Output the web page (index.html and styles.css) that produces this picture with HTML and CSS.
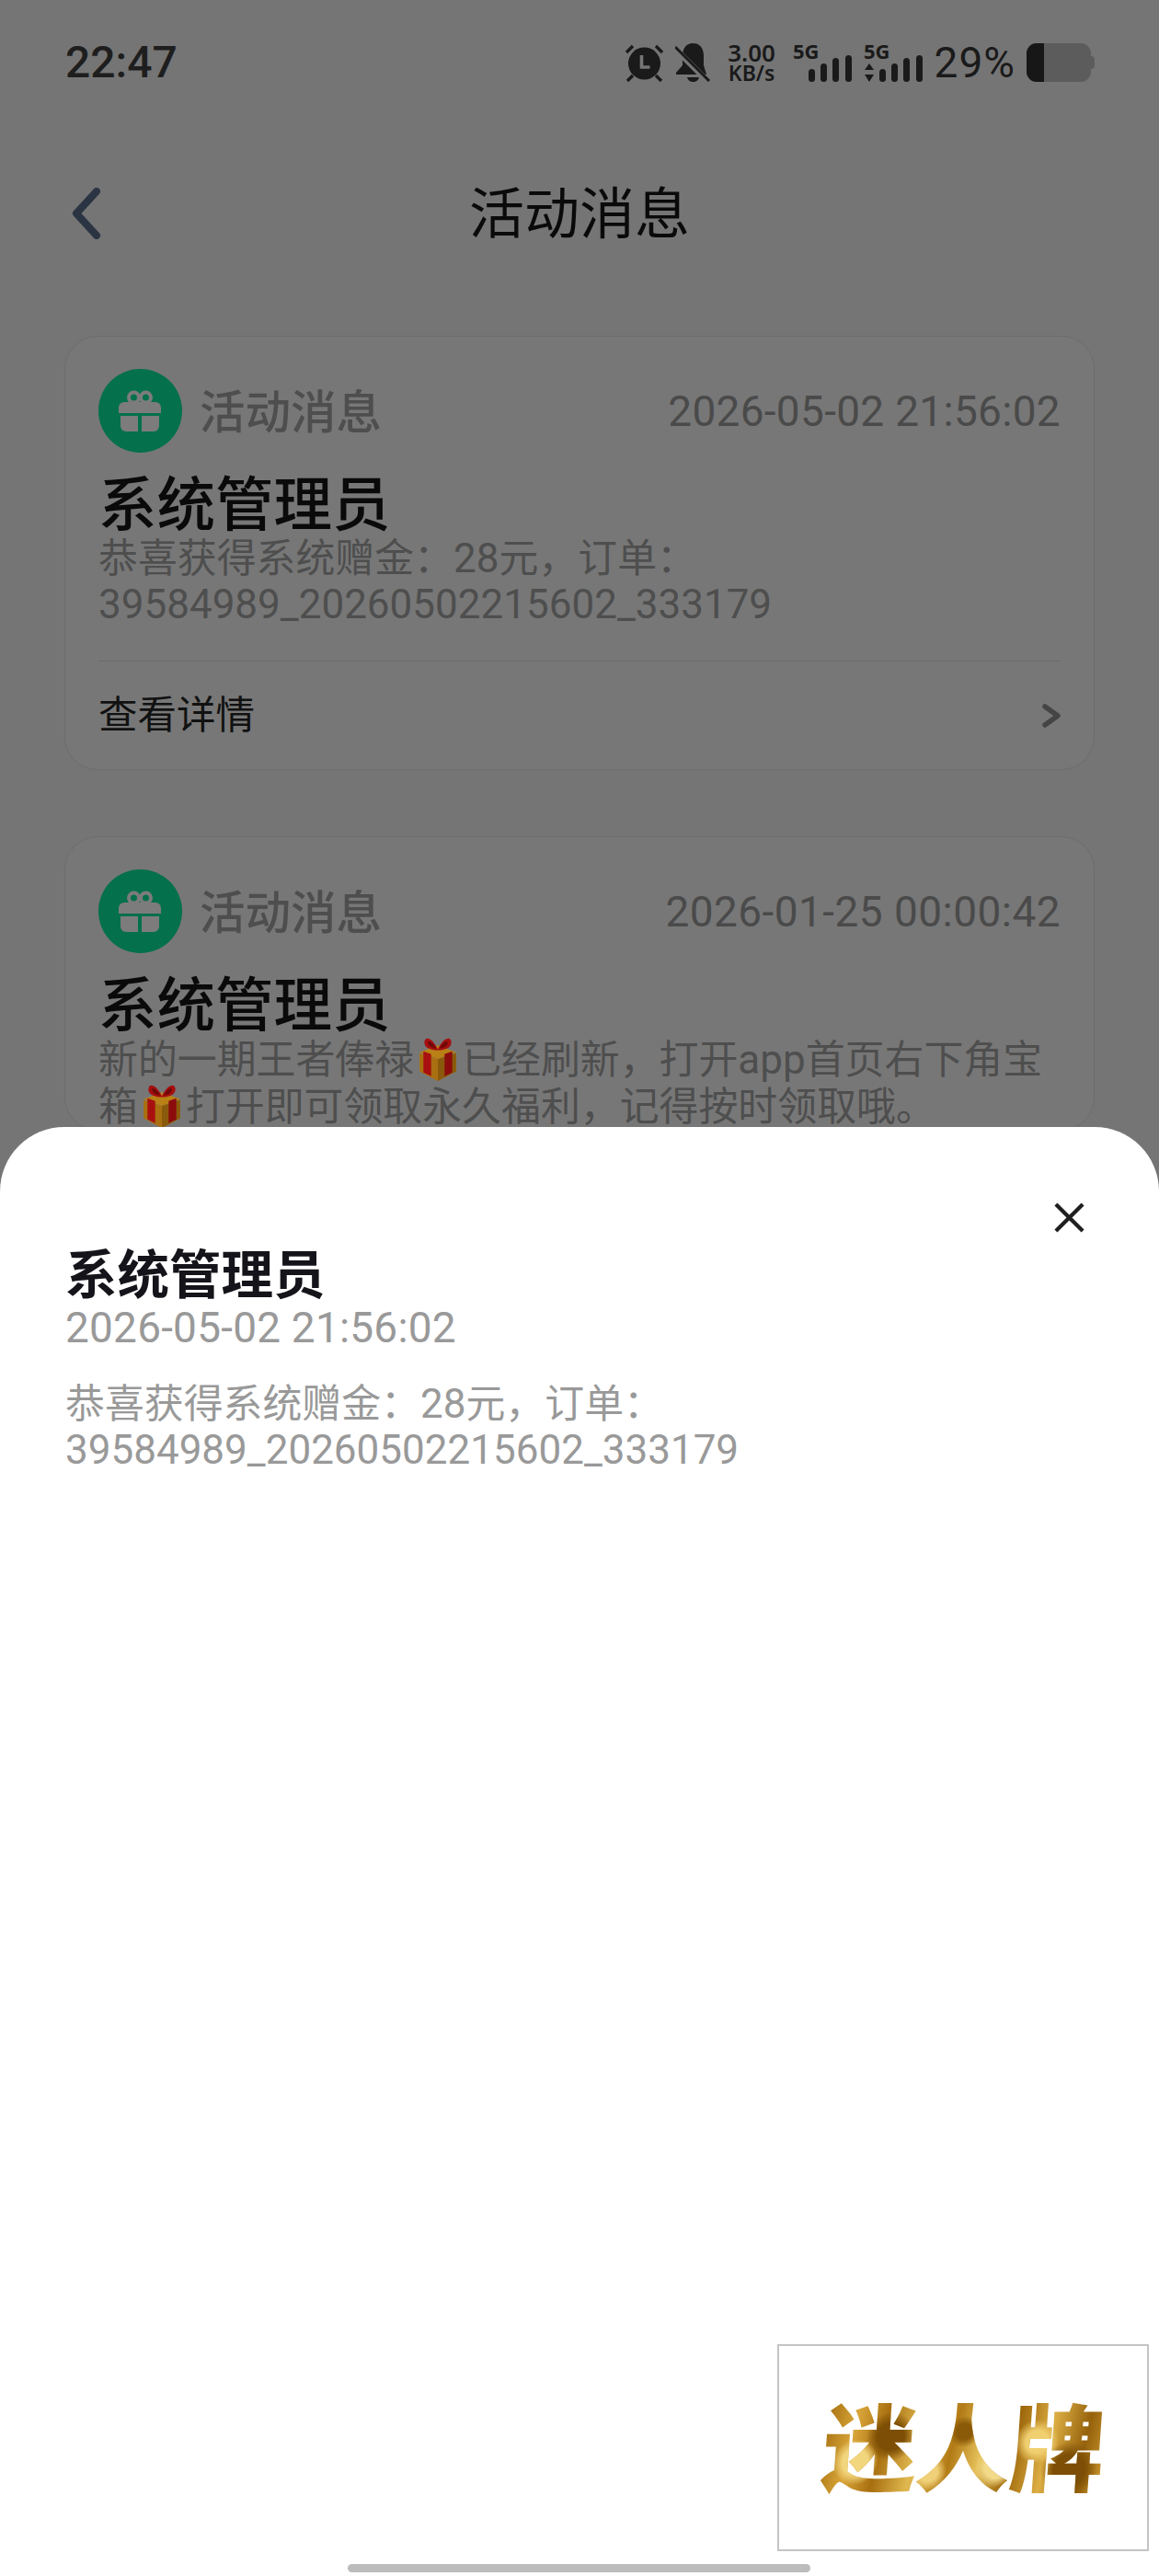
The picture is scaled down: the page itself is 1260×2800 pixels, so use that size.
FILE: index.html
```html
<!DOCTYPE html>
<html lang="zh">
<head>
<meta charset="utf-8">
<title>活动消息</title>
<link rel="stylesheet" href="styles.css">
</head>
<body>
<div class="screen">
  <div class="status">
    <span class="time">22:47</span>
    <div class="status-right">
      <svg class="ic-alarm" viewBox="0 0 43 42"><path d="M2 10 9 3M41 10 34 3" fill="none" stroke="#1a1a1a" stroke-width="3.4"/><circle cx="21.500" cy="22" r="17.500" fill="#1a1a1a"/><path d="M18.500 13v13h9" fill="none" stroke="#757575" stroke-width="3.600"/><path d="M9 35 3 41M34 35 40 41" fill="none" stroke="#1a1a1a" stroke-width="3.400"/></svg>
      <svg class="ic-bell" viewBox="0 0 39 42"><path d="M19.500 0C11 0 8 7 8 14V24L1 32V34H34L31 24V14C31 7 28 0 19.500 0Z" fill="#1a1a1a"/><path d="M13 37H26C25 41 22 42 19.500 42S14 41 13 37Z" fill="#1a1a1a"/><path d="M0 6 36 42" stroke="#757575" stroke-width="6.500"/><path d="M0 4 37 41" stroke="#1a1a1a" stroke-width="3"/></svg>
      <div class="net"><span class="net-a">3.00</span><span class="net-b">KB/s</span></div>
      <svg class="ic-sig" viewBox="0 -6 64 48"><text class="sig-t" x="0" y="17">5G</text><rect x="17" y="28" width="7" height="14" rx="3.500"/><rect x="30" y="22" width="7" height="20" rx="3.500"/><rect x="43" y="16" width="7" height="26" rx="3.500"/><rect x="57" y="13" width="7" height="29" rx="3.500"/></svg>
      <svg class="ic-sig" viewBox="0 -6 64 48"><text class="sig-t" x="0" y="17">5G</text><path d="M6 22 11 29H1ZM6 42 1 34H11Z"/><rect x="17" y="28" width="7" height="14" rx="3.500"/><rect x="30" y="22" width="7" height="20" rx="3.500"/><rect x="43" y="16" width="7" height="26" rx="3.500"/><rect x="57" y="13" width="7" height="29" rx="3.500"/></svg>
      <span class="pct">29%</span>
      <div class="battery"><div class="battery-body"><div class="battery-fill"></div></div><div class="battery-nub"></div></div>
    </div>
  </div>

  <header class="nav">
    <svg class="back" viewBox="0 0 32 56"><path d="M27 4 5 28 27 52" fill="none" stroke="#2a3442" stroke-width="8" stroke-linecap="round" stroke-linejoin="round"/></svg>
    <h1 class="nav-title">活动消息</h1>
  </header>

  <main class="list">
    <article class="card">
      <div class="card-head">
        <svg class="gift-badge" viewBox="0 0 91 91"><circle cx="45.500" cy="45.500" r="45.500" fill="#04704c"/><g fill="#7c7c7c"><path d="M22 48V42a6 6 0 0 1 6-6H62a6 6 0 0 1 6 6v6Z"/><path d="M24 51H43V68H30a6 6 0 0 1-6-6Z"/><path d="M47 51H66V62a6 6 0 0 1-6 6H47Z"/></g><circle cx="38.500" cy="31" r="5.500" fill="none" stroke="#7c7c7c" stroke-width="4"/><circle cx="51.500" cy="31" r="5.500" fill="none" stroke="#7c7c7c" stroke-width="4"/></svg>
        <span class="card-type">活动消息</span>
        <span class="card-date">2026-05-02 21:56:02</span>
      </div>
      <h2 class="card-title">系统管理员</h2>
      <p class="card-body">恭喜获得系统赠金：<span class="num">28</span>元，订单：<span class="num">39584989_20260502215602_333179</span></p>
      <div class="card-foot">
        <span class="foot-label">查看详情</span>
        <svg class="chev" viewBox="0 0 20 26"><path d="M3 3 17 13 3 23" fill="none" stroke="#454545" stroke-width="5.500" stroke-linecap="round" stroke-linejoin="round"/></svg>
      </div>
    </article>

    <article class="card">
      <div class="card-head">
        <svg class="gift-badge" viewBox="0 0 91 91"><circle cx="45.500" cy="45.500" r="45.500" fill="#04704c"/><g fill="#7c7c7c"><path d="M22 48V42a6 6 0 0 1 6-6H62a6 6 0 0 1 6 6v6Z"/><path d="M24 51H43V68H30a6 6 0 0 1-6-6Z"/><path d="M47 51H66V62a6 6 0 0 1-6 6H47Z"/></g><circle cx="38.500" cy="31" r="5.500" fill="none" stroke="#7c7c7c" stroke-width="4"/><circle cx="51.500" cy="31" r="5.500" fill="none" stroke="#7c7c7c" stroke-width="4"/></svg>
        <span class="card-type">活动消息</span>
        <span class="card-date card-date-wide">2026-01-25 00:00:42</span>
      </div>
      <h2 class="card-title">系统管理员</h2>
      <p class="card-body">新的一期王者俸禄<svg class="emoji" viewBox="0 0 44 46"><use href="#present"/></svg>已经刷新，打开<span class="num">app</span>首页右下角宝箱<svg class="emoji" viewBox="0 0 44 46"><use href="#present"/></svg>打开即可领取永久福利，记得按时领取哦。</p>
    </article>
  </main>

  <section class="sheet">
    <svg class="close" viewBox="0 0 34 34"><path d="M2 2 32 32M32 2 2 32" stroke="#1f1f1f" stroke-width="4.400" fill="none"/></svg>
    <h2 class="sheet-title">系统管理员</h2>
    <div class="sheet-date">2026-05-02 21:56:02</div>
    <p class="sheet-body">恭喜获得系统赠金：<span class="num">28</span>元，订单：<span class="num">39584989_20260502215602_333179</span></p>
  </section>

  <div class="watermark"><span class="wm-text">迷人牌</span></div>
  <div class="home-bar"></div>

  <svg class="defs" width="0" height="0">
    <defs>
      <g id="present">
        <path d="M3 17 22 23 41 17V36L22 46 3 36Z" fill="#a96f10"/>
        <path d="M22 23 41 17V36L22 46Z" fill="#8a5a0c"/>
        <path d="M3 16 22 9 41 16 22 23Z" fill="#b98016"/>
        <path d="M7 15 15 18V41L7 37Z" fill="#a81010"/>
        <path d="M37 15 29 18V41L37 37Z" fill="#8c0c0c"/>
        <path d="M22 13C16 0 8 -1 8 6 8 12 16 14 22 14 28 14 36 12 36 6 36 -1 28 0 22 13Z" fill="#a50f0f"/>
        <path d="M12 5C14 4 18 8 20 12 15 11 11 9 12 5ZM32 5C30 4 26 8 24 12 29 11 33 9 32 5Z" fill="#6f0808"/>
      </g>
    </defs>
  </svg>
</div>
</body>
</html>
```
FILE: styles.css
```css
* { box-sizing: border-box; }
html, body { margin: 0; padding: 0; }
body { width: 1260px; height: 2800px; overflow: hidden; font-family: Roboto, "Noto Sans CJK SC", sans-serif; }
h1, h2, p { margin: 0; font-weight: 400; }
.screen { position: relative; width: 1260px; height: 2800px; background: #757575; overflow: hidden; }
.num { font-family: Roboto, sans-serif; font-size: 44px; }

.status { display: flex; align-items: flex-start; justify-content: space-between; height: 89px; padding: 47px 70px 0 71px; color: #1a1a1a; }
.time { font-size: 48px; line-height: 42px; font-weight: 500; color: #1e1e1e; }
.status-right { display: flex; align-items: flex-end; height: 42px; }
.ic-alarm { width: 43px; height: 42px; }
.ic-bell { width: 39px; height: 42px; margin-left: 12px; }
.net { display: flex; flex-direction: column; align-items: center; width: 53px; margin-left: 18px; font-family: "Noto Sans", sans-serif; font-weight: 600; }
.net-a { font-size: 26px; line-height: 24px; }
.net-b { font-size: 23px; line-height: 20px; }
.ic-sig { width: 64px; height: 48px; margin-left: 18px; fill: #1a1a1a; }
.ic-sig + .ic-sig { margin-left: 13px; }
.sig-t { font-family: "Noto Sans", sans-serif; font-weight: 700; font-size: 22px; }
.pct { margin-left: 13px; font-size: 46px; line-height: 42px; letter-spacing: 1px; }
.battery { display: flex; align-items: center; margin-left: 12px; }
.battery-body { width: 70px; height: 42px; border-radius: 11px; background: #5c5c5c; overflow: hidden; }
.battery-fill { width: 19px; height: 42px; background: #171717; }
.battery-nub { width: 4px; height: 14px; border-radius: 0 4px 4px 0; background: #5c5c5c; }

.nav { position: relative; display: flex; justify-content: center; height: 56px; margin-top: 115px; }
.back { position: absolute; left: 78px; top: 0; width: 32px; height: 56px; }
.nav-title { font-size: 60px; line-height: 60px; color: #0a0a0a; }

.list { display: flex; flex-direction: column; gap: 72px; height: 2000px; padding: 0 70px; margin-top: 105px; }
.card { width: 1120px; padding: 35px 36px 0; background: #777; border: 1px solid #6d6d6d; border-radius: 36px; }
.card-head { display: flex; align-items: center; height: 91px; }
.gift-badge { width: 91px; height: 91px; flex: none; }
.card-type { margin: 0 0 4px 19px; font-size: 49.500px; font-weight: 500; color: #4e4e4e; }
.card-date { margin-left: auto; font-size: 46px; letter-spacing: 0.300px; color: #4a4a4a; }
.card-date-wide { letter-spacing: 0.450px; }
.card-title { margin-top: 26px; font-size: 63.500px; line-height: 64px; font-weight: 500; color: #0a0a0a; }
.card-body { font-size: 42.900px; line-height: 50px; color: #4e4e4e; }
.emoji { width: 46px; height: 50px; margin: 0 3px; vertical-align: -9px; }
.card-foot { display: flex; align-items: center; justify-content: space-between; height: 118px; margin-top: 36px; border-top: 1px solid #6b6b6b; }
.foot-label { margin-bottom: 8px; font-size: 42.500px; color: #111; }
.chev { width: 20px; height: 26px; }

.sheet { position: absolute; left: 0; right: 0; top: 1225px; bottom: 0; padding: 131px 71px 0; background: #fff; border-radius: 70px 70px 0 0; }
.close { position: absolute; top: 82px; left: 1146px; width: 33px; height: 33px; }
.sheet-title { font-size: 56.500px; line-height: 62px; font-weight: 700; color: #14141a; }
.sheet-date { font-size: 46px; line-height: 50px; letter-spacing: 0.200px; color: #999; }
.sheet-body { margin-top: 33px; font-size: 42.900px; line-height: 50px; color: #999; }

.watermark { position: absolute; left: 845px; top: 2548px; display: flex; align-items: center; justify-content: center; width: 404px; height: 225px; padding-top: 8px; background: #fff; border: 2px solid #c4c4c4; }
.wm-text { font-size: 103px; line-height: 110px; font-weight: 900; letter-spacing: -1px; transform: skewX(-4deg); color: transparent; background:
  radial-gradient(circle at 12% 60%, #f2d67e 0 5%, transparent 9%),
  radial-gradient(circle at 24% 35%, #7d4f06 0 6%, transparent 11%),
  radial-gradient(circle at 38% 70%, #f0d078 0 5%, transparent 10%),
  radial-gradient(circle at 50% 30%, #8a5a08 0 5%, transparent 10%),
  radial-gradient(circle at 62% 65%, #f3da8a 0 6%, transparent 11%),
  radial-gradient(circle at 76% 40%, #f0cf70 0 5%, transparent 10%),
  radial-gradient(circle at 88% 68%, #7c4e06 0 6%, transparent 11%),
  linear-gradient(100deg, #a06a0c 0%, #d9a63a 12%, #a86f10 22%, #e0b850 34%, #b27a15 46%, #e6c25c 56%, #9c6509 66%, #dcae44 78%, #95610b 90%, #cf9c34 100%);
  -webkit-background-clip: text; background-clip: text; }
.home-bar { position: absolute; left: 378px; top: 2787px; width: 503px; height: 9px; border-radius: 5px; background: #bcbcbc; }
.defs { position: absolute; }
```
